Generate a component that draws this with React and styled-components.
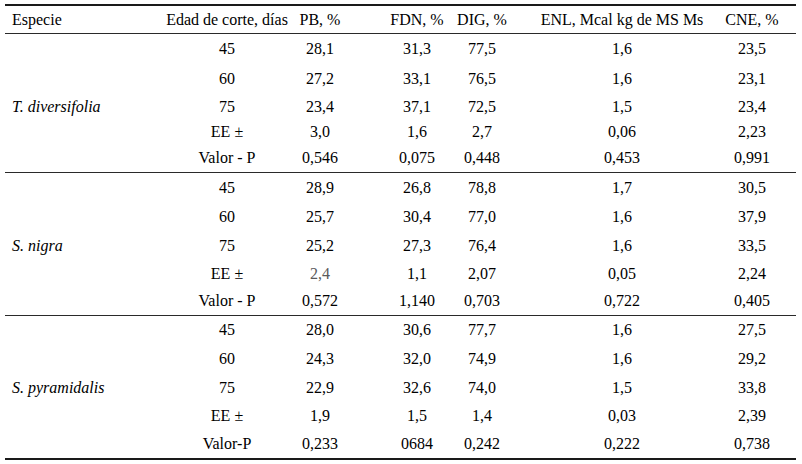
import styled, { createGlobalStyle } from "styled-components"

const GlobalStyle = createGlobalStyle`
    html, body {
        margin: 0;
        padding: 0;
        background: #fff;
    }
    body {
        font-family: "Liberation Serif", "Times New Roman", serif;
        color: #000;
    }
`;

// column widths and inner padding, so each column's centre lands where the original has it
const columns = [
    { width: 155, pad: "0 0 0 7px", align: "flex-start" },
    { width: 140, pad: "0 6px 0 0", align: "center" },
    { width: 40, pad: "0", align: "center" },
    { width: 104, pad: "0 0 0 50px", align: "center" },
    { width: 76, pad: "0", align: "center" },
    { width: 204, pad: "0", align: "center" },
    { width: 72, pad: "0 16px 0 0", align: "center" },
];

const template = columns.map(c => `${c.width}px`).join(" ");

const Page = styled.div`
    padding: 4px 6px 0 5px;
`;

const Table = styled.div`
    width: 791px;
    border-top: 2px solid #1a1a1a;
    border-bottom: 2px solid #1a1a1a;
`;

const Row = styled.div`
    display: grid;
    grid-template-columns: ${template};
    height: ${props => props.h}px;
`;

const HeaderRow = styled(Row)`
    border-bottom: 1px solid #2a2a2a;
`;

const Group = styled.div`
    border-bottom: ${props => props.last ? "none" : "1px solid #2a2a2a"};
`;

const Cell = styled.div`
    display: flex;
    align-items: center;
    justify-content: ${props => columns[props.col].align};
    padding: ${props => columns[props.col].pad};
    font-size: 16px;
    white-space: nowrap;
    color: ${props => props.muted ? "#5a5a5a" : "#000"};
`;

const Species = styled.i`
    font-style: italic;
`;

const headers = ["Especie", "Edad de corte, días", "PB, %", "FDN, %", "DIG, %", "ENL, Mcal kg de MS Ms", "CNE, %"];

const groups = [
    {
        name: "T. diversifolia",
        heights: [30, 30, 26, 24, 28],
        rows: [
            ["45", "28,1", "31,3", "77,5", "1,6", "23,5"],
            ["60", "27,2", "33,1", "76,5", "1,6", "23,1"],
            ["75", "23,4", "37,1", "72,5", "1,5", "23,4"],
            ["EE ±", "3,0", "1,6", "2,7", "0,06", "2,23"],
            ["Valor - P", "0,546", "0,075", "0,448", "0,453", "0,991"],
        ],
    },
    {
        name: "S. nigra",
        heights: [29, 29, 29, 27, 28],
        rows: [
            ["45", "28,9", "26,8", "78,8", "1,7", "30,5"],
            ["60", "25,7", "30,4", "77,0", "1,6", "37,9"],
            ["75", "25,2", "27,3", "76,4", "1,6", "33,5"],
            ["EE ±", "2,4", "1,1", "2,07", "0,05", "2,24"],
            ["Valor - P", "0,572", "1,140", "0,703", "0,722", "0,405"],
        ],
        muted: [3, 0],
    },
    {
        name: "S. pyramidalis",
        heights: [28, 29, 29, 28, 28],
        rows: [
            ["45", "28,0", "30,6", "77,7", "1,6", "27,5"],
            ["60", "24,3", "32,0", "74,9", "1,6", "29,2"],
            ["75", "22,9", "32,6", "74,0", "1,5", "33,8"],
            ["EE ±", "1,9", "1,5", "1,4", "0,03", "2,39"],
            ["Valor-P", "0,233", "0684", "0,242", "0,222", "0,738"],
        ],
    },
];

export default function App() {
    return (
        <>
            <GlobalStyle />
            <Page>
                <Table>
                    <HeaderRow h={27}>
                        {headers.map((h, i) => <Cell key={h} col={i}>{h}</Cell>)}
                    </HeaderRow>
                    {groups.map((g, gi) => (
                        <Group key={g.name} last={gi === groups.length - 1}>
                            {g.rows.map((r, ri) => (
                                <Row key={ri} h={g.heights[ri]}>
                                    <Cell col={0}>{ri === 2 && <Species>{g.name}</Species>}</Cell>
                                    {r.map((v, ci) => (
                                        <Cell
                                            key={ci}
                                            col={ci + 1}
                                            muted={g.muted && g.muted[0] === ri && g.muted[1] === ci - 1}
                                        >
                                            {v}
                                        </Cell>
                                    ))}
                                </Row>
                            ))}
                        </Group>
                    ))}
                </Table>
            </Page>
        </>
    )
}
